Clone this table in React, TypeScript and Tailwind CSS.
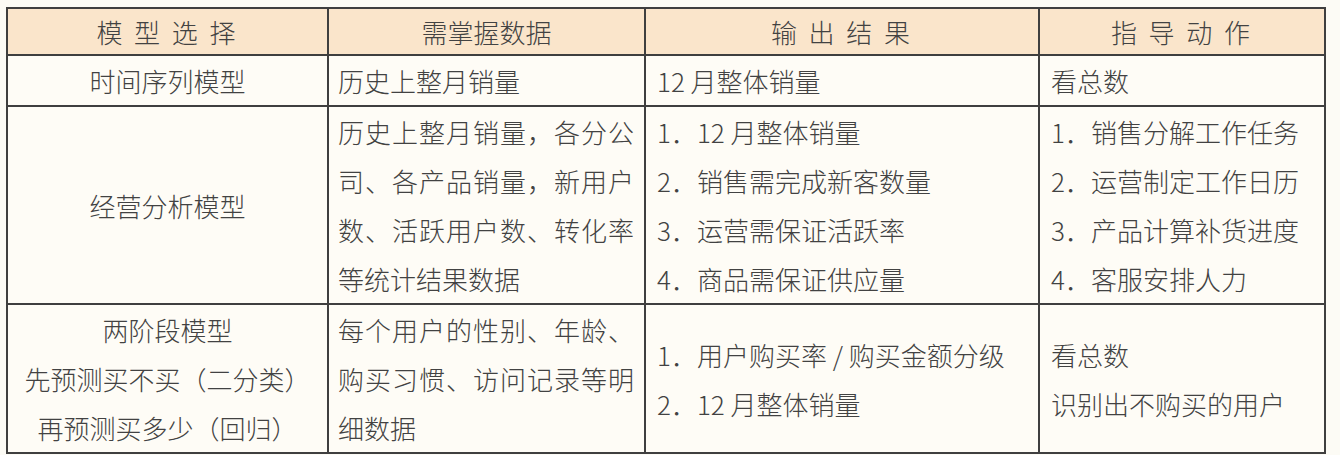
import React from "react";

type Line = { text: string; fill?: boolean };

const rows: { model: string[]; data: Line[]; output: string[]; action: string[]; h: string }[] = [
  {
    model: ["时间序列模型"],
    data: [{ text: "历史上整月销量" }],
    output: ["12 月整体销量"],
    action: ["看总数"],
    h: "h-[48px]",
  },
  {
    model: ["经营分析模型"],
    data: [
      { text: "历史上整月销量，各分公", fill: true },
      { text: "司、各产品销量，新用户", fill: true },
      { text: "数、活跃用户数、转化率", fill: true },
      { text: "等统计结果数据" },
    ],
    output: ["1．12 月整体销量", "2．销售需完成新客数量", "3．运营需保证活跃率", "4．商品需保证供应量"],
    action: ["1．销售分解工作任务", "2．运营制定工作日历", "3．产品计算补货进度", "4．客服安排人力"],
    h: "h-[198px]",
  },
  {
    model: ["两阶段模型", "先预测买不买（二分类）", "再预测买多少（回归）"],
    data: [
      { text: "每个用户的性别、年龄、", fill: true },
      { text: "购买习惯、访问记录等明", fill: true },
      { text: "细数据" },
    ],
    output: ["1．用户购买率 / 购买金额分级", "2．12 月整体销量"],
    action: ["看总数", "识别出不购买的用户"],
    h: "h-[147px]",
  },
];

const cell = "border-2 border-[#3f3f3f] align-middle p-0";

export default function App() {
  return (
    <div className="min-h-[455px] w-[1340px] bg-[#fcfbf5] pl-[6px] pt-[7px] font-['Noto_Sans_CJK_SC','Noto_Sans',sans-serif] text-[26px] font-light text-[#424242]">
      <table className="w-[1318px] table-fixed border-collapse bg-[#fefcf6]">
        <colgroup>
          <col className="w-[321px]" />
          <col className="w-[317px]" />
          <col className="w-[394px]" />
          <col className="w-[286px]" />
        </colgroup>
        <thead>
          <tr className="h-[47px] bg-[#fae5cb]">
            <th className={`${cell} text-center font-light tracking-[3px]`}>模 型 选 择</th>
            <th className={`${cell} text-center font-light`}>需掌握数据</th>
            <th className={`${cell} text-center font-light tracking-[3px]`}>输 出 结 果</th>
            <th className={`${cell} text-center font-light tracking-[3px]`}>指 导 动 作</th>
          </tr>
        </thead>
        <tbody>
          {rows.map((r, i) => (
            <tr key={i} className={r.h}>
              <td className={cell}>
                <div className="flex flex-col items-center leading-[49px]">
                  {r.model.map((t) => (
                    <div key={t}>{t}</div>
                  ))}
                </div>
              </td>
              <td className={cell}>
                <div className="flex flex-col pl-[9px] pr-[10px] leading-[49px]">
                  {r.data.map((l) => (
                    <div key={l.text} className={l.fill ? "text-justify [text-align-last:justify]" : ""}>
                      {l.text}
                    </div>
                  ))}
                </div>
              </td>
              <td className={cell}>
                <div className="flex flex-col pl-[11px] leading-[49px]">
                  {r.output.map((t) => (
                    <div key={t}>{t}</div>
                  ))}
                </div>
              </td>
              <td className={cell}>
                <div className="flex flex-col pl-[11px] leading-[49px]">
                  {r.action.map((t) => (
                    <div key={t}>{t}</div>
                  ))}
                </div>
              </td>
            </tr>
          ))}
        </tbody>
      </table>
    </div>
  );
}
